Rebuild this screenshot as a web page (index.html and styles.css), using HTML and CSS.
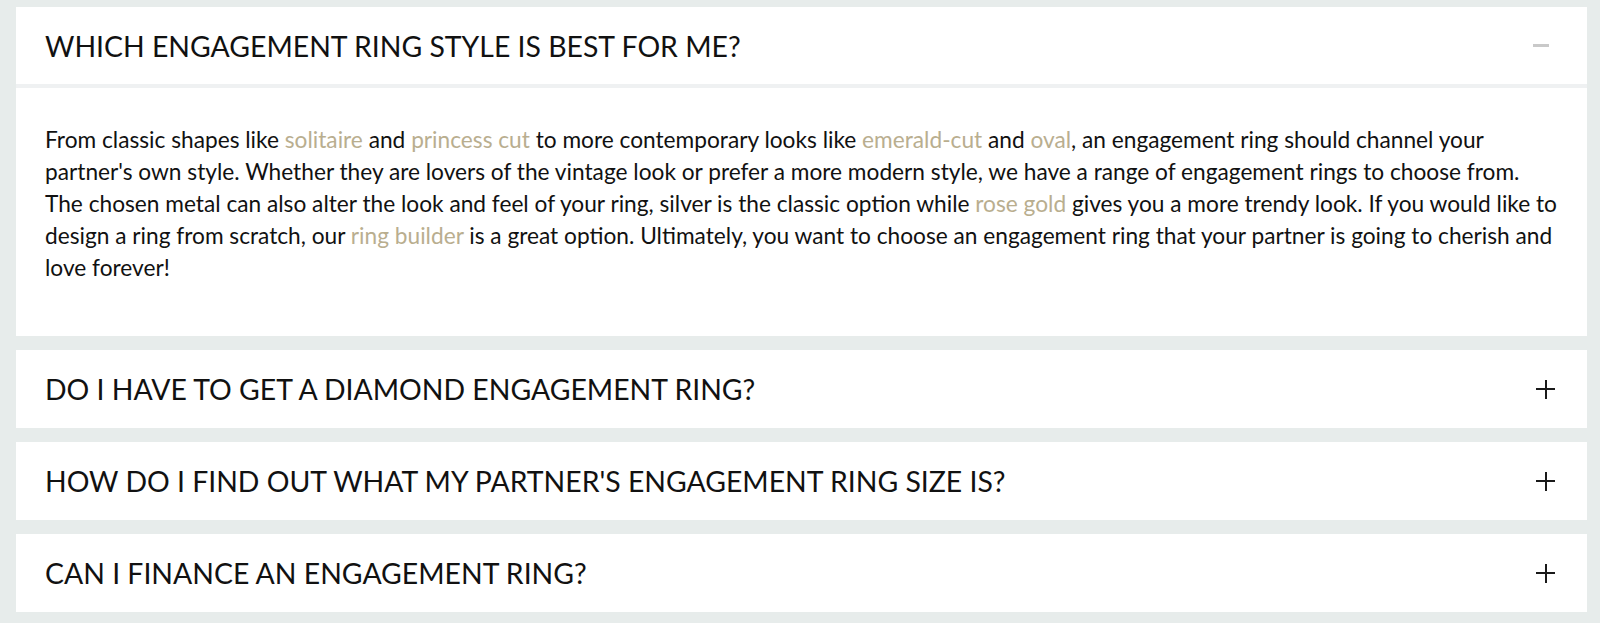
FILE: index.html
```html
<!DOCTYPE html>
<html lang="en">
<head>
<meta charset="utf-8">
<title>FAQ</title>
<link rel="stylesheet" href="styles.css">
</head>
<body>
<div class="faq">
  <div class="item open">
    <div class="head">
      <h3 class="q">WHICH ENGAGEMENT RING STYLE IS BEST FOR ME?</h3>
      <span class="icon minus"></span>
    </div>
    <div class="answer">
      <p>From classic shapes like <a href="#">solitaire</a> and <a href="#">princess cut</a> to more contemporary looks like <a href="#">emerald-cut</a> and <a href="#">oval</a>, an engagement ring should channel your partner's own style. Whether they are lovers of the vintage look or prefer a more modern style, we have a range of engagement rings to choose from. The chosen metal can also alter the look and feel of your ring, silver is the classic option while <a href="#">rose gold</a> gives you a more trendy look. If you would like to design a ring from scratch, our <a href="#">ring builder</a> is a great option. Ultimately, you want to choose an engagement ring that your partner is going to cherish and love forever!</p>
    </div>
  </div>
  <div class="item">
    <div class="head">
      <h3 class="q">DO I HAVE TO GET A DIAMOND ENGAGEMENT RING?</h3>
      <span class="icon plus"></span>
    </div>
  </div>
  <div class="item">
    <div class="head">
      <h3 class="q">HOW DO I FIND OUT WHAT MY PARTNER'S ENGAGEMENT RING SIZE IS?</h3>
      <span class="icon plus"></span>
    </div>
  </div>
  <div class="item">
    <div class="head">
      <h3 class="q">CAN I FINANCE AN ENGAGEMENT RING?</h3>
      <span class="icon plus"></span>
    </div>
  </div>
</div>
</body>
</html>
```
FILE: styles.css
```css
html, body {
  margin: 0;
  padding: 0;
  background: #e7eceb;
}
body {
  font-family: Lato, "Open Sans", sans-serif;
  color: #111;
}
.faq {
  display: flex;
  flex-direction: column;
  gap: 14px;
  padding: 7px 13px 0 16px;
}
.item {
  background: #fff;
}
.head {
  height: 78px;
  display: flex;
  align-items: center;
  justify-content: space-between;
  padding: 0 32px 0 29px;
}
.open .head {
  height: 77px;
  border-bottom: 4px solid #eff1f2;
  padding-right: 38px;
}
.q {
  margin: 0;
  font-size: 28.4px;
  font-weight: 400;
  color: #111;
  letter-spacing: 0;
}
.icon {
  position: relative;
  display: block;
  width: 19px;
  height: 19px;
}
.icon::before,
.icon::after {
  content: "";
  position: absolute;
  background: #1a1a1a;
}
.plus::before {
  left: 0;
  right: 0;
  top: 8.5px;
  height: 2px;
}
.plus::after {
  top: 0;
  bottom: 0;
  left: 8.5px;
  width: 2px;
}
.minus {
  width: 16px;
  height: 4px;
}
.minus::before {
  left: 0;
  right: 0;
  top: 0.5px;
  height: 3px;
  background: #c9c9c9;
}
.minus::after {
  display: none;
}
.answer {
  padding: 36px 29px 52px 29px;
}
.answer p {
  margin: 0;
  font-size: 22.7px;
  line-height: 32px;
  color: #111;
}
.answer a {
  color: #b9ae8f;
  text-decoration: none;
}
```
